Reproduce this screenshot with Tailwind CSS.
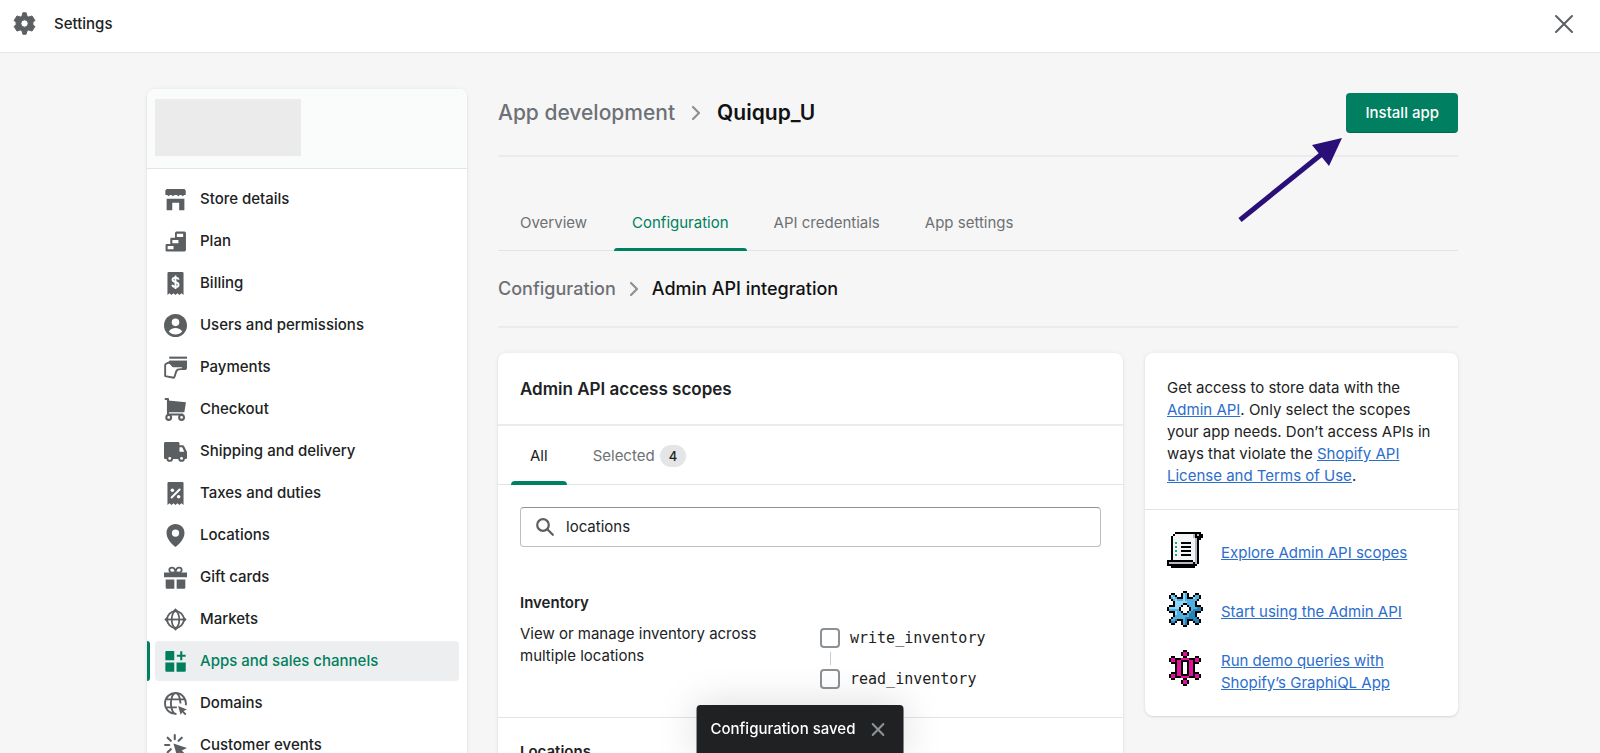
<!DOCTYPE html>
<html lang="en">
<head>
  <meta charset="UTF-8" />
  <meta name="viewport" content="width=device-width, initial-scale=1.0" />
  <title>Settings | Apps and sales channels</title>
  <script src="https://cdn.jsdelivr.net/npm/@tailwindcss/browser@4"></script>
</head>
<body class="flex h-screen flex-col overflow-hidden bg-[#f6f6f6] font-['Inter','Liberation_Sans',sans-serif] text-[15px] leading-[22px] text-[#202223]">

  <!-- Top bar -->
  <header class="flex h-[52px] shrink-0 items-center justify-between bg-white pr-6 pb-[5px] pl-[13px] shadow-[0_1px_1px_rgba(0,0,0,0.06)]">
    <div class="flex items-center gap-[18px]">
      <svg class="size-[23px]" viewBox="0 0 24 24" fill="#5c5f62">
        <path fill-rule="evenodd" d="M10.300 0.800h3.400l0.800 3.300 1.900 1.100 3.500-1.100 2.900 4.700-2 2.200v2l2 2.200-2.900 4.700-3.500-1.100-1.900 1.100-0.800 3.300h-3.400l-0.800-3.300-1.900-1.100-3.500 1.100-2.900-4.700 2-2.200v-2l-2-2.200 2.900-4.700 3.500 1.100 1.900-1.100zM12 8.200a3.800 3.800 0 1 0 0 7.600 3.800 3.800 0 0 0 0-7.600z" stroke="#5c5f62" stroke-width="1" stroke-linejoin="round" />
      </svg>
      <h1 class="text-[15px] font-medium">Settings</h1>
    </div>
    <button type="button" aria-label="Close settings" class="flex size-6 items-center justify-center">
      <svg class="size-5" viewBox="0 0 20 20" fill="none" stroke="#5c5f62" stroke-width="2" stroke-linecap="round"><path d="M2 2l16 16M18 2L2 18" /></svg>
    </button>
  </header>

  <div class="flex items-start gap-[31px] pt-[37px] pr-[142px] pl-[147px]">

    <!-- Sidebar -->
    <aside class="w-80 shrink-0 overflow-hidden rounded-lg bg-white shadow-[0_0_5px_rgba(23,24,24,0.06),0_1px_2px_rgba(0,0,0,0.10)]">
      <div class="h-[80px] border-b border-[#e1e3e5] bg-[#fafbfb] pt-[10px] pl-2">
        <div class="h-[57px] w-[146px] bg-[#ebebeb]"></div>
      </div>
      <nav class="flex flex-col gap-[2px] px-2 py-[10px] font-medium">
        <a href="#" class="flex h-10 items-center gap-[13px] rounded pl-[9px]">
          <svg class="size-[23px]" viewBox="0 0 22 22" fill="#5c5f62">
            <path d="M2.500 1h17l1.300 1.500v4.300h-1.600l-1.200 1.200-1.600-1.200h-1.200l-1.600 1.200-1.400-1.200h-2.200l-1.400 1.200-1.600-1.200h-1.200l-1.600 1.200-1.200-1.200h-1.700v-4.300z" />
            <path d="M2.500 10.200h17v11h-5v-7h-6.600v7h-5.400z" />
          </svg>
          Store details
        </a>
        <a href="#" class="flex h-10 items-center gap-[13px] rounded pl-[9px]">
          <svg class="size-[23px]" viewBox="0 0 22 22" fill="#5c5f62">
            <path fill-rule="evenodd" d="M12 1.500h7.500a1.500 1.500 0 0 1 1.500 1.500v16a1.500 1.500 0 0 1-1.500 1.500h-17a1 1 0 0 1-1-1v-5a1 1 0 0 1 1-1h3.500v-5a1 1 0 0 1 1-1h3.500v-4.500a1.500 1.500 0 0 1 1.500-1.500zM12.300 3.500v3.200h6v-3.200zM8 9.500v3.200h5.800v-3.200zM3.500 15.300v3.200h5.600v-3.200z" />
          </svg>
          Plan
        </a>
        <a href="#" class="flex h-10 items-center gap-[13px] rounded pl-[9px]">
          <svg class="size-[23px]" viewBox="0 0 22 22">
            <path fill="#5c5f62" d="M4.500 0h13a1.200 1.200 0 0 1 1.200 1.200v20.800l-2-1.600-1.900 1.600-1.900-1.600-1.900 1.600-1.900-1.600-1.900 1.600-1.900-1.600-2 1.600v-20.800a1.200 1.200 0 0 1 1.200-1.200z" />
            <path d="M14 7.300c-.3-1.300-1.400-1.900-3-1.900-1.700 0-2.800.8-2.800 2.100 0 3 5.700 1.500 5.700 4.600 0 1.400-1.200 2.200-2.900 2.200-1.700 0-2.900-.8-3.100-2.100M11 3.400v12.800" fill="none" stroke="#fff" stroke-width="1.800" />
          </svg>
          Billing
        </a>
        <a href="#" class="flex h-10 items-center gap-[13px] rounded pl-[9px]">
          <svg class="size-[23px]" viewBox="0 0 22 22">
            <circle cx="11" cy="11" r="11" fill="#5c5f62" />
            <circle cx="11" cy="8" r="3.600" fill="#fff" />
            <path d="M4.600 16.700c1.200-2.300 3.600-3.400 6.400-3.400s5.200 1.100 6.400 3.400c-1.600 1.900-3.900 2.900-6.400 2.900s-4.800-1-6.400-2.900z" fill="#fff" />
          </svg>
          Users and permissions
        </a>
        <a href="#" class="flex h-10 items-center gap-[13px] rounded pl-[9px]">
          <svg class="size-[23px]" viewBox="0 0 22 22">
            <path d="M5 .6h17v2h-17z" fill="#5c5f62" />
            <path d="M5 4.500h17v6.500a2.500 2.500 0 0 1-2.500 2.500h-8.500v-4z" fill="#5c5f62" />
            <path d="M5.500 5.800l-3.300 1.400a1.800 1.800 0 0 0-1.100 1.600v10.400l8.300 1.600c1.700-1.300 1-5.600 3.600-7.800l4.600-.7c1.200-.8.700-2.500-.6-2.500h-8.500z" fill="#fff" stroke="#5c5f62" stroke-width="1.800" stroke-linejoin="round" />
            <path d="M5 4.500h17v4.600h-13.500l-3.500-1.600z" fill="#5c5f62" />
          </svg>
          Payments
        </a>
        <a href="#" class="flex h-10 items-center gap-[13px] rounded pl-[9px]">
          <svg class="size-[23px]" viewBox="0 0 22 22">
            <path d="M1.500 1h2.300v14.800h13.700" fill="none" stroke="#5c5f62" stroke-width="2" stroke-linejoin="round" stroke-linecap="round" />
            <path d="M4 2.500l17 1.500-1.400 8.800a1 1 0 0 1-1 .9h-14.600z" fill="#5c5f62" />
            <circle cx="4.500" cy="18.600" r="2.300" fill="#fff" stroke="#5c5f62" stroke-width="2" />
            <circle cx="16.800" cy="18.600" r="2.300" fill="#fff" stroke="#5c5f62" stroke-width="2" />
          </svg>
          Checkout
        </a>
        <a href="#" class="flex h-10 items-center gap-[13px] rounded pl-[9px]">
          <svg class="size-[23px]" viewBox="0 0 22 22">
            <path d="M1.300 2h12.200a1.300 1.300 0 0 1 1.300 1.300v1.700h2.700c1 0 1.500.5 1.900 1.300l2.600 5.200v5.500a1.200 1.200 0 0 1-1.200 1.200h-19.500a1.300 1.300 0 0 1-1.300-1.300v-13.600a1.300 1.300 0 0 1 1.300-1.300z" fill="#5c5f62" />
            <path d="M14.800 7h2.600l2 4.200h-4.600z" fill="#fff" />
            <circle cx="5.500" cy="17.600" r="2.300" fill="#fff" stroke="#5c5f62" stroke-width="1.800" />
            <circle cx="16.800" cy="17.600" r="2.300" fill="#fff" stroke="#5c5f62" stroke-width="1.800" />
          </svg>
          Shipping and delivery
        </a>
        <a href="#" class="flex h-10 items-center gap-[13px] rounded pl-[9px]">
          <svg class="size-[23px]" viewBox="0 0 22 22">
            <path fill="#5c5f62" d="M4.500 0h13a1.200 1.200 0 0 1 1.200 1.200v20.800l-2-1.600-1.900 1.600-1.900-1.600-1.900 1.600-1.900-1.600-1.900 1.600-1.900-1.600-2 1.600v-20.800a1.200 1.200 0 0 1 1.200-1.200z" />
            <path d="M7.300 14.800l7.600-7.600" stroke="#fff" stroke-width="1.900" stroke-linecap="round" />
            <circle cx="8" cy="7.800" r="1.700" fill="#fff" />
            <circle cx="14" cy="14.200" r="1.700" fill="#fff" />
          </svg>
          Taxes and duties
        </a>
        <a href="#" class="flex h-10 items-center gap-[13px] rounded pl-[9px]">
          <svg class="size-[23px]" viewBox="0 0 22 22">
            <path fill="#5c5f62" fill-rule="evenodd" d="M11 0c4.800 0 8.600 3.700 8.600 8.400 0 6.300-5.600 11.400-8.600 13.600-3-2.200-8.600-7.300-8.600-13.600 0-4.700 3.800-8.400 8.600-8.400zM11 5.200a3.500 3.500 0 1 0 0 7 3.500 3.500 0 0 0 0-7z" />
          </svg>
          Locations
        </a>
        <a href="#" class="flex h-10 items-center gap-[13px] rounded pl-[9px]">
          <svg class="size-[23px]" viewBox="0 0 22 22">
            <path d="M0 6.300h22v4.500h-22zM1.600 13h8.300v8.700h-7.100a1.200 1.200 0 0 1-1.200-1.200zM12.100 13h8.300v7.500a1.200 1.200 0 0 1-1.200 1.200h-7.100z" fill="#5c5f62" />
            <path d="M11 6c-.3-3-1.400-4.500-3.400-4.500-1.500 0-2.500 1-2.500 2.300 0 1.300 1 2.500 2.500 2.500zM11 6c.3-3 1.400-4.500 3.400-4.500 1.500 0 2.500 1 2.500 2.300 0 1.300-1 2.500-2.500 2.500z" fill="#fff" stroke="#5c5f62" stroke-width="1.800" />
          </svg>
          Gift cards
        </a>
        <a href="#" class="flex h-10 items-center gap-[13px] rounded pl-[9px]">
          <svg class="size-[23px]" viewBox="0 0 22 22" fill="none" stroke="#5c5f62" stroke-width="1.700">
            <circle cx="11" cy="11" r="8" />
            <ellipse cx="11" cy="11" rx="3.600" ry="8" />
            <path d="M2 11h18" />
            <path d="M11 .3l3.300 3.400h-6.600zM11 21.700l3.300-3.400h-6.600zM.3 11l3.400-3.300v6.600zM21.700 11l-3.400-3.300v6.600z" fill="#5c5f62" stroke="none" />
          </svg>
          Markets
        </a>
        <a href="#" aria-current="page" class="relative flex h-10 items-center gap-[13px] rounded bg-[#edeeef] pl-[9px] text-[#007f5f]">
          <span class="absolute top-0 -left-2 h-full w-[3px] rounded-r bg-[#008060]"></span>
          <svg class="size-[23px]" viewBox="0 0 22 22" fill="#007f5f">
            <path d="M2.300 1h7.500v8.800h-8.500v-7.800a1 1 0 0 1 1-1zM1.300 12h8.500v8.800h-7.500a1 1 0 0 1-1-1zM12 12h8.800v7.800a1 1 0 0 1-1 1h-7.800zM15.500 1.300h2v3.200h3.200v2h-3.200v3.200h-2v-3.200h-3.200v-2h3.200z" />
          </svg>
          Apps and sales channels
        </a>
        <a href="#" class="flex h-10 items-center gap-[13px] rounded pl-[9px]">
          <svg class="size-[23px]" viewBox="0 0 22 22" fill="none" stroke="#5c5f62" stroke-width="1.800">
            <path d="M20.800 12.700a10 10 0 1 0-8.800 8.200M11.500 21c-2.600 0-4.900-4.500-4.900-10s2-10 4.400-10c2.500 0 4.600 4 4.800 10M2 7h18M1.300 14.700h11" />
            <path d="M13.500 13.500l8.500 3.200-3.300 1.500 2.800 2.800-1.300 1.300-2.800-2.900-1.400 2.600z" fill="#5c5f62" stroke="none" />
          </svg>
          Domains
        </a>
        <a href="#" class="flex h-10 items-center gap-[13px] rounded pl-[9px]">
          <svg class="size-[23px]" viewBox="0 0 22 22" fill="none" stroke="#5c5f62" stroke-width="2" stroke-linecap="round">
            <path d="M10.300 1v4M3.500 3.500l3 3M17 3.500l-3 3M1 10.500h4M3.500 17.500l3-3" />
            <path d="M9 9l13 4.500-5 2.300 4 4-2 2-4-4-2.200 4.200z" fill="#5c5f62" stroke="none" />
          </svg>
          Customer events
        </a>
      </nav>
    </aside>

    <!-- Main column -->
    <main class="min-w-0 flex-1">
      <div class="relative flex items-center justify-between border-b-2 border-[#eaebec] pt-1 pb-[22px]">
        <div class="flex items-center gap-[11px] text-[21px] leading-7 font-medium">
          <a href="#" class="text-[#6d7175]">App development</a>
          <svg class="h-4 w-5" viewBox="0 0 20 16" fill="none" stroke="#8c9196" stroke-width="2.200" stroke-linecap="round" stroke-linejoin="round"><path d="M7 2l6 6-6 6" /></svg>
          <h2 class="font-semibold text-[#111213]">Quiqup_U</h2>
        </div>
        <button type="button" class="h-10 rounded bg-[#008060] px-[19px] font-medium text-white shadow-[inset_0_-1px_0_rgba(0,0,0,0.2)]">Install app</button>
        <!-- Callout arrow -->
        <svg class="pointer-events-none absolute top-12 right-[115px] h-[86px] w-[106px]" viewBox="0 0 106 86">
          <path d="M3 83L86 16" stroke="#2a0f78" stroke-width="5" />
          <path d="M105 1L75 8l17 21z" fill="#2a0f78" />
        </svg>
      </div>

      <div class="mt-[42px] flex gap-[9px] border-b border-[#e1e3e5] pl-1 text-[#6d7175]">
        <button type="button" class="h-[51px] px-[18px] pb-1">Overview</button>
        <button type="button" class="relative h-[51px] px-[18px] pb-1 text-[#007f5f]">Configuration<span class="absolute inset-x-0 -bottom-px h-[3px] rounded-t bg-[#008060]"></span></button>
        <button type="button" class="h-[51px] px-[18px] pb-1">API credentials</button>
        <button type="button" class="h-[51px] px-[18px] pb-1">App settings</button>
      </div>

      <div class="flex h-[77px] items-center gap-2 border-b-2 border-[#eaebec] text-[18px] leading-6 font-medium">
        <a href="#" class="text-[#6d7175]">Configuration</a>
        <svg class="h-4 w-5" viewBox="0 0 20 16" fill="none" stroke="#8c9196" stroke-width="2.200" stroke-linecap="round" stroke-linejoin="round"><path d="M7 2l6 6-6 6" /></svg>
        <h3 class="text-[#111213]">Admin API integration</h3>
      </div>

      <div class="mt-[25px] flex items-start gap-[22px]">

        <!-- Access scopes -->
        <section class="min-w-0 flex-1 rounded-lg bg-white shadow-[0_0_5px_rgba(23,24,24,0.06),0_1px_2px_rgba(0,0,0,0.10)]">
          <h3 class="flex h-[73px] items-center border-b-2 border-[#eaebec] px-[22px] text-[17px] font-semibold">Admin API access scopes</h3>
          <div class="flex gap-2 border-b border-[#e1e3e5] pl-[13px]">
            <button type="button" class="relative h-[58px] px-[19px] pt-[2px]">All<span class="absolute inset-x-0 -bottom-px h-1 rounded-t bg-[#008060]"></span></button>
            <button type="button" class="flex h-[58px] items-center gap-[5px] px-[18px] pt-[2px] text-[#6d7175]">Selected <span class="rounded-full bg-[#e4e5e7] px-[9px] text-[13px] font-medium text-[#202223]">4</span></button>
          </div>
          <div class="px-[22px] pt-[22px]">
            <label class="flex h-10 items-center gap-3 rounded border border-[#babfc3] border-t-[#8c9196] px-[15px]">
              <svg class="size-[18px] shrink-0" viewBox="0 0 18 18" fill="none" stroke="#5c5f62" stroke-width="2.200" stroke-linecap="round"><circle cx="7" cy="7" r="5.800" /><path d="M11.300 11.300l5.500 5.500" /></svg>
              <input type="text" aria-label="Search scopes" value="locations" class="min-w-0 flex-1 bg-transparent outline-none" />
            </label>
          </div>
          <div class="h-[171px] border-b border-[#e1e3e5] px-[22px] pt-[45px]">
            <h4 class="font-semibold">Inventory</h4>
            <div class="grid grid-cols-[1fr_281px] gap-5 pt-[9px]">
              <p class="max-w-[250px]">View or manage inventory across multiple locations</p>
              <div class="flex flex-col pt-1 font-['DejaVu_Sans_Mono',monospace]">
                <label class="flex h-[22px] items-center gap-[10px]"><input type="checkbox" class="size-5 appearance-none rounded border-2 border-[#8c9196] bg-white checked:bg-[#008060]" />write_inventory</label>
                <span class="my-[3px] ml-[10px] h-[13px] w-px bg-[#c9cccf]"></span>
                <label class="flex h-[22px] items-center gap-[10px]"><input type="checkbox" class="size-5 appearance-none rounded border-2 border-[#8c9196] bg-white checked:bg-[#008060]" />read_inventory</label>
              </div>
            </div>
          </div>
          <div class="px-[22px] pt-[23px] pb-6">
            <h4 class="font-semibold">Locations</h4>
          </div>
        </section>

        <!-- Help -->
        <aside class="w-[313px] shrink-0 rounded-lg bg-white shadow-[0_0_5px_rgba(23,24,24,0.06),0_1px_2px_rgba(0,0,0,0.10)]">
          <p class="border-b border-[#e1e3e5] pt-6 pr-5 pb-[22px] pl-[22px]">
            Get access to store data with the <a href="#" class="text-[#2c6ecb] underline">Admin API</a>. Only select the scopes your app needs. Don’t access APIs in ways that violate the <a href="#" class="text-[#2c6ecb] underline">Shopify API License and Terms of Use</a>.
          </p>
          <ul class="flex flex-col gap-[23px] p-[22px]">
            <li class="flex items-center gap-[18px]">
              <svg class="size-9 shrink-0" viewBox="0 0 18 18" shape-rendering="crispEdges" data-sprite="scroll"></svg>
              <a href="#" class="pt-[6px] text-[#2c6ecb] underline">Explore Admin API scopes</a>
            </li>
            <li class="flex items-center gap-[18px]">
              <svg class="size-9 shrink-0" viewBox="0 0 18 18" shape-rendering="crispEdges" data-sprite="gear"></svg>
              <a href="#" class="pt-[6px] text-[#2c6ecb] underline">Start using the Admin API</a>
            </li>
            <li class="flex items-start gap-[18px]">
              <svg class="size-9 shrink-0" viewBox="0 0 18 18" shape-rendering="crispEdges" data-sprite="graph"></svg>
              <a href="#" class="text-[#2c6ecb] underline">Run demo queries with Shopify’s GraphiQL App</a>
            </li>
          </ul>
        </aside>
      </div>
    </main>
  </div>

  <!-- Toast -->
  <div role="status" class="fixed bottom-0 left-1/2 flex h-12 -translate-x-1/2 items-center gap-4 rounded-t bg-[#202123] px-[14px] font-medium text-white shadow-[0_0_40px_rgba(0,0,0,0.15)]">
    Configuration saved
    <button type="button" aria-label="Dismiss" class="flex w-[18px] justify-start">
      <svg class="size-[13px]" viewBox="0 0 12 12" fill="none" stroke="#8c9196" stroke-width="2" stroke-linecap="round"><path d="M1 1l10 10M11 1L1 11" /></svg>
    </button>
  </div>

  <script>
    // 18x18 pixel sprites, one letter per colour
    const colors = { K: "#000000", W: "#f4f5f7", G: "#b5b8c2", E: "#1fa37c", L: "#8fd6f7", B: "#4fb0e0", D: "#2384b8", M: "#e6109c", P: "#ffffff" };
    const sprites = {
      scroll: [
        "....KKKKKKKKKKKKK.",
        "...KWWWWWWWWWGKGKK",
        "..KWWWWWWWWWWGKKKK",
        "..KWWWWWWWWWWWGKK.",
        "..KWWWWWWWWWWWGK..",
        "..KWEWWKKKKKWWGK..",
        "..KWWWWWWWWWWWGK..",
        "..KWEWWKKKKKWWGK..",
        "..KWWWWWWWWWWWGK..",
        "..KWEWWKKKKKWWGK..",
        "..KWWWWWWWWWWWGK..",
        "..KWEWWKKKKKWWGK..",
        "..KWWWWWWWWWWWGK..",
        "..KWWWWWWWWWWWGK..",
        "KKKKKKKKKKKKKWGK..",
        "KGGGGGGGGGGGGKGK..",
        "KKKKKKKKKKKKKKK...",
        "..KKKKKKKKKKKK...."
      ],
      gear: [
        "........KK........",
        "..KK...KLBK...KK..",
        ".KLBK..KLBK..KBBK.",
        ".KBLBKKKLBKKKLBBK.",
        "..KBLBBBLBBBBBBK..",
        "...KLLLLLLBBBBK...",
        "...KLLLLKKBBBBK...",
        ".KKKLLLKPPKBBBKKK.",
        "KLLLLLKPPPPKBBBDDK",
        "KBBBBBKPPPPKBDDDDK",
        ".KKKLBBKPPKBDDKKK.",
        "...KLBBBKKBDDDK...",
        "...KBBBBBBBDDDK...",
        "..KBBBBBBDDDDDDK..",
        ".KBBDKKKBDKKKDDDK.",
        ".KDDK..KBDK..KDDK.",
        "..KK...KBDK...KK..",
        "........KK........"
      ],
      graph: [
        "........KK........",
        ".......KMMK.......",
        ".......KMMK.......",
        "..KK....KK....KK..",
        ".KMMKKKMMMMKKKMMK.",
        ".KMMKMMKKKKMMKMMK.",
        "..KKKMMKPPKMMKKK..",
        "....KMMKPPKMMK....",
        "....KMMKPPKMMK....",
        "....KMMKPPKMMK....",
        "....KMMKPPKMMK....",
        "..KKKMMKPPKMMKKK..",
        ".KMMKMMKKKKMMKMMK.",
        ".KMMKKKMMMMKKKMMK.",
        "..KK....KK....KK..",
        ".......KMMK.......",
        ".......KMMK.......",
        "........KK........"
      ]
    };
    document.querySelectorAll("[data-sprite]").forEach(svg => {
      sprites[svg.dataset.sprite].forEach((row, y) => {
        [...row].forEach((c, x) => {
          if (c === ".") return;
          const rect = document.createElementNS("http://www.w3.org/2000/svg", "rect");
          rect.setAttribute("x", x);
          rect.setAttribute("y", y);
          rect.setAttribute("width", 1);
          rect.setAttribute("height", 1);
          rect.setAttribute("fill", colors[c]);
          svg.appendChild(rect);
        });
      });
    });
  </script>
</body>
</html>
